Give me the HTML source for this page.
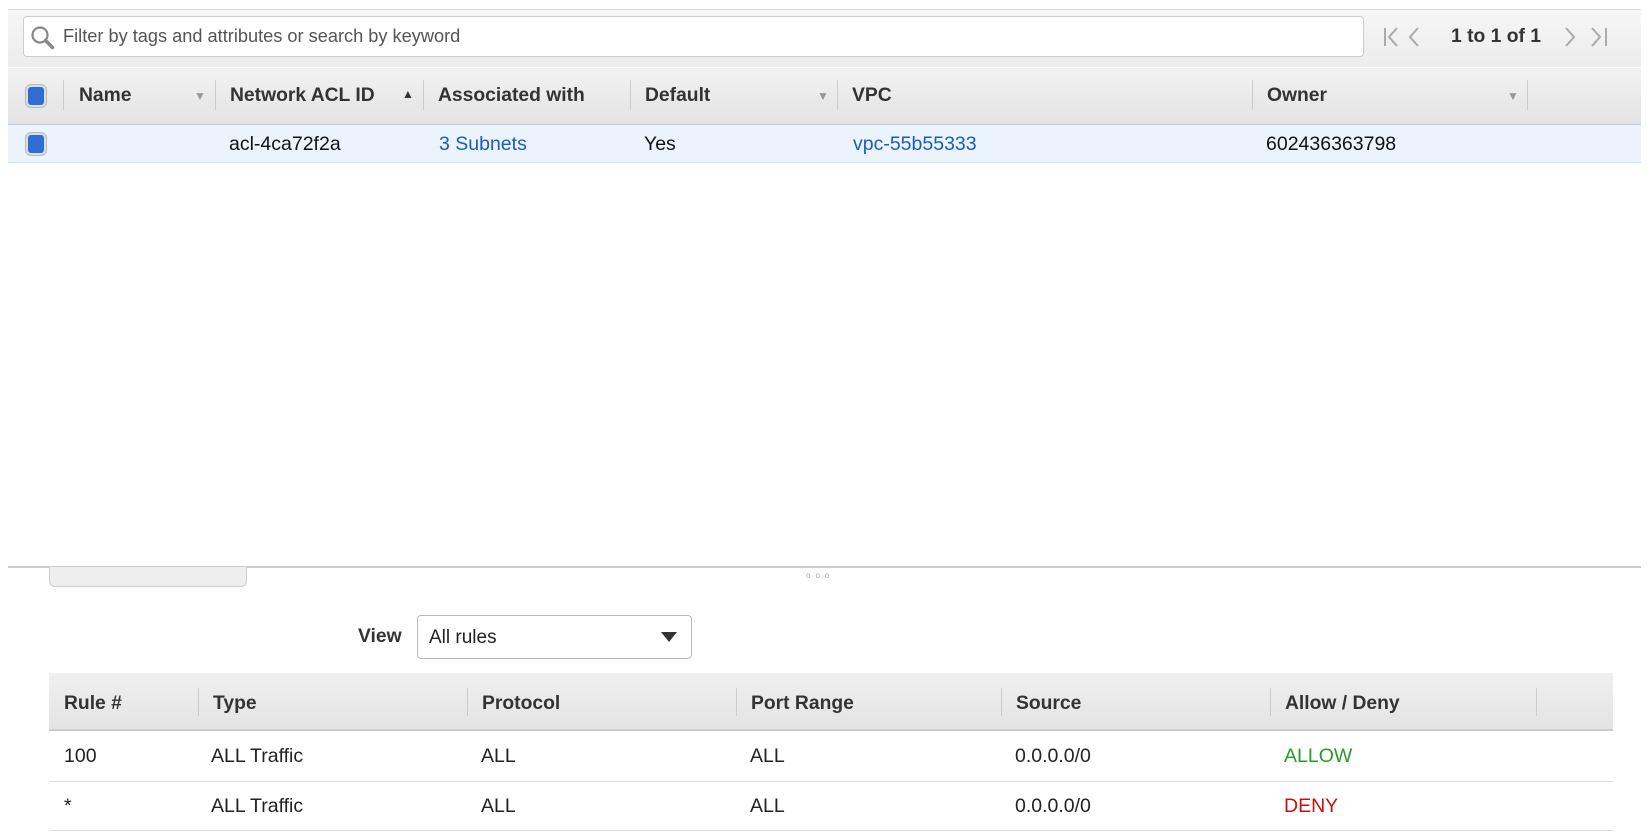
<!DOCTYPE html>
<html><head><meta charset="utf-8"><style>
*{box-sizing:border-box;margin:0;padding:0}
body{width:1650px;height:836px;background:#fff;font-family:"Liberation Sans",Arial,sans-serif;position:relative;overflow:hidden;color:#111}
.a{position:absolute}
.top{left:8px;top:9px;width:1633px;height:58px;background:linear-gradient(#f6f6f6,#ececec);border-top:1px solid #ddd}
.search{left:23px;top:16px;width:1341px;height:41px;background:#fff;border:1px solid #ccc;border-radius:4px}
.ph{left:63px;top:26px;font-size:18.2px;color:#555}
.hdr{left:8px;top:67px;width:1633px;height:58px;background:linear-gradient(#f2f2f2,#e3e3e3);border-top:1px solid #fff;border-bottom:1px solid #ccc}
.ht{font-size:19.3px;font-weight:bold;color:#333;top:85px}
.sep{width:1px;background:#ccc}
.row{left:8px;top:125px;width:1633px;height:38px;background:#ebf3fd;border-bottom:1px solid #d8e2ee}
.rt{font-size:19.5px;top:133px;color:#111}
.lnk{color:#1a5db8}
.cb{width:20px;height:22px;border-radius:5px;background:#2f6ed0;border:2px solid #d9dfe6;box-shadow:0 0 0 1px #bbb}
.caret{font-size:12px;color:#999}
.rh{left:49px;top:673px;width:1564px;height:58px;background:linear-gradient(#f0f0f0,#e3e3e3);border-bottom:2px solid #ccc}
.rht{font-size:19.3px;font-weight:bold;color:#333;top:693px}
.rr{font-size:19.5px;color:#222}
.line{left:49px;width:1564px;height:1px;background:#ddd}
</style></head><body>
<div class="a top"></div>
<div class="a search"></div>
<svg class="a" style="left:30px;top:25px" width="26" height="26" viewBox="0 0 26 26"><circle cx="10" cy="10" r="7.5" fill="none" stroke="#888" stroke-width="2.2"/><path d="M15.5 15.5l7 7" stroke="#888" stroke-width="3.5" stroke-linecap="round"/></svg>
<div class="a ph">Filter by tags and attributes or search by keyword</div>
<svg class="a" style="left:1382px;top:25px" width="100" height="24"><path d="M3 3v18M15 3l-8 9 8 9M36 3l-8 9 8 9" fill="none" stroke="#aaa" stroke-width="2"/></svg>
<div class="a" style="left:1451px;top:26px;font-size:19.3px;font-weight:bold;color:#333">1 to 1 of 1</div>
<svg class="a" style="left:1560px;top:25px" width="50" height="24"><path d="M6 3l8 9-8 9M32 3l8 9-8 9M46 3v18" fill="none" stroke="#aaa" stroke-width="2"/></svg>

<div class="a hdr"></div>
<div class="a cb" style="left:26px;top:85px"></div>
<div class="a sep" style="left:63px;top:80px;height:30px"></div>
<div class="a ht" style="left:79px">Name</div><div class="a caret" style="left:194px;top:89px">▼</div>
<div class="a sep" style="left:215px;top:80px;height:30px"></div>
<div class="a ht" style="left:230px">Network ACL ID</div><div class="a caret" style="left:402px;top:87px;color:#333">▲</div>
<div class="a sep" style="left:423px;top:80px;height:30px"></div>
<div class="a ht" style="left:438px">Associated with</div>
<div class="a sep" style="left:630px;top:80px;height:30px"></div>
<div class="a ht" style="left:645px">Default</div><div class="a caret" style="left:817px;top:89px">▼</div>
<div class="a sep" style="left:837px;top:80px;height:30px"></div>
<div class="a ht" style="left:852px">VPC</div>
<div class="a sep" style="left:1252px;top:80px;height:30px"></div>
<div class="a ht" style="left:1267px">Owner</div><div class="a caret" style="left:1507px;top:89px">▼</div>
<div class="a sep" style="left:1527px;top:80px;height:30px"></div>

<div class="a row"></div>
<div class="a cb" style="left:26px;top:133px"></div>
<div class="a rt" style="left:229px">acl-4ca72f2a</div>
<div class="a rt lnk" style="left:439px">3 Subnets</div>
<div class="a rt" style="left:644px">Yes</div>
<div class="a rt lnk" style="left:853px">vpc-55b55333</div>
<div class="a rt" style="left:1266px">602436363798</div>

<div class="a" style="left:8px;top:566px;width:1633px;height:2px;background:#ccc"></div>
<div class="a" style="left:806px;top:571px;font-size:8px;color:#aaa;letter-spacing:5px">ooo</div>
<div class="a" style="left:49px;top:567px;width:198px;height:20px;background:#eee;border:1px solid #ccc;border-top:none;border-radius:0 0 6px 6px"></div>

<div class="a" style="left:358px;top:626px;font-size:19.3px;font-weight:bold;color:#333">View</div>
<div class="a" style="left:417px;top:615px;width:275px;height:44px;border:1px solid #bbb;border-radius:4px;background:#fff"></div>
<div class="a" style="left:429px;top:627px;font-size:19px;color:#222">All rules</div>
<svg class="a" style="left:661px;top:632px" width="16" height="10"><path d="M0 0h16L8 10z" fill="#333"/></svg>

<div class="a rh"></div>
<div class="a rht" style="left:64px">Rule #</div>
<div class="a sep" style="left:198px;top:688px;height:28px"></div>
<div class="a rht" style="left:213px">Type</div>
<div class="a sep" style="left:467px;top:688px;height:28px"></div>
<div class="a rht" style="left:482px">Protocol</div>
<div class="a sep" style="left:736px;top:688px;height:28px"></div>
<div class="a rht" style="left:751px">Port Range</div>
<div class="a sep" style="left:1001px;top:688px;height:28px"></div>
<div class="a rht" style="left:1016px">Source</div>
<div class="a sep" style="left:1270px;top:688px;height:28px"></div>
<div class="a rht" style="left:1285px">Allow / Deny</div>
<div class="a sep" style="left:1536px;top:688px;height:28px"></div>

<div class="a rr" style="left:64px;top:745px">100</div>
<div class="a rr" style="left:211px;top:745px">ALL Traffic</div>
<div class="a rr" style="left:481px;top:745px">ALL</div>
<div class="a rr" style="left:750px;top:745px">ALL</div>
<div class="a rr" style="left:1015px;top:745px">0.0.0.0/0</div>
<div class="a rr" style="left:1284px;top:745px;color:#2a9a2a">ALLOW</div>
<div class="a line" style="top:781px"></div>
<div class="a rr" style="left:64px;top:795px">*</div>
<div class="a rr" style="left:211px;top:795px">ALL Traffic</div>
<div class="a rr" style="left:481px;top:795px">ALL</div>
<div class="a rr" style="left:750px;top:795px">ALL</div>
<div class="a rr" style="left:1015px;top:795px">0.0.0.0/0</div>
<div class="a rr" style="left:1284px;top:795px;color:#c81010">DENY</div>
<div class="a line" style="top:830px"></div>
</body></html>
